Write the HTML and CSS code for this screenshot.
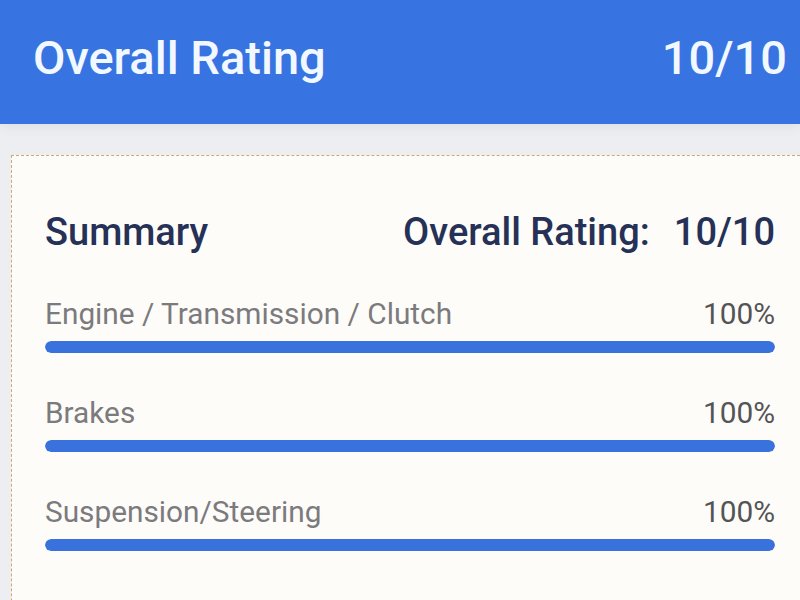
FILE: index.html
```html
<!DOCTYPE html>
<html lang="en">
<head>
<meta charset="utf-8">
<title>Overall Rating</title>
<link rel="stylesheet" href="styles.css">
</head>
<body>
<header class="topbar">
  <h1 class="topbar-title">Overall Rating</h1>
  <span class="topbar-score">10/10</span>
</header>
<main class="content">
  <section class="card">
    <div class="summary-head">
      <h2 class="summary-title">Summary</h2>
      <div class="summary-score"><span>Overall Rating:</span><span>10/10</span></div>
    </div>
    <div class="rows">
      <div class="row">
        <div class="row-head"><span class="row-label">Engine / Transmission / Clutch</span><span class="row-value">100%</span></div>
        <div class="bar"><div class="bar-fill" style="width:100%"></div></div>
      </div>
      <div class="row">
        <div class="row-head"><span class="row-label">Brakes</span><span class="row-value">100%</span></div>
        <div class="bar"><div class="bar-fill" style="width:100%"></div></div>
      </div>
      <div class="row">
        <div class="row-head"><span class="row-label">Suspension/Steering</span><span class="row-value">100%</span></div>
        <div class="bar"><div class="bar-fill" style="width:100%"></div></div>
      </div>
      <div class="row">
        <div class="row-head"><span class="row-label">Interior</span><span class="row-value">100%</span></div>
        <div class="bar"><div class="bar-fill" style="width:100%"></div></div>
      </div>
    </div>
  </section>
</main>
</body>
</html>
```

FILE: styles.css
```css
* { box-sizing: border-box; }
html, body {
  margin: 0;
  padding: 0;
  width: 800px;
  height: 600px;
  overflow: hidden;
  background: #eceef1;
  font-family: Roboto, "Noto Sans", Arial, sans-serif;
}
.topbar {
  height: 124px;
  background: #3874e1;
  display: flex;
  align-items: center;
  justify-content: space-between;
  padding: 0 13px 8px 33px;
  color: #f2f8ff;
  box-shadow: 0 2px 12px rgba(0, 0, 0, 0.07);
  position: relative;
}
.topbar-title, .topbar-score {
  margin: 0;
  font-size: 47px;
  font-weight: 500;
  line-height: 54px;
}
.content {
  padding: 31px 0 0 11px;
  margin-right: -10px;
}
.card {
  background: #fefcf9;
  border: 1px dashed #d2a86c;
  padding: 54px 34px 40px 33px;
}
.summary-head {
  display: flex;
  justify-content: space-between;
  align-items: baseline;
  color: #263157;
}
.summary-title {
  margin: 0;
  font-size: 38px;
  font-weight: 500;
  line-height: 44px;
}
.summary-score {
  display: flex;
  gap: 24px;
  font-size: 38px;
  font-weight: 500;
  line-height: 44px;
}
.rows {
  display: flex;
  flex-direction: column;
  gap: 42px;
  margin-top: 42px;
}
.row-head {
  display: flex;
  justify-content: space-between;
  font-size: 29.8px;
  line-height: 36px;
}
.row-label { color: #7b7b7d; }
.row-value { color: #545456; }
.bar {
  margin-top: 9px;
  height: 12px;
  border-radius: 6px;
  background: #e2e6ee;
  overflow: hidden;
}
.bar-fill {
  height: 100%;
  background: #3a72dd;
  border-radius: 6px;
}
```
